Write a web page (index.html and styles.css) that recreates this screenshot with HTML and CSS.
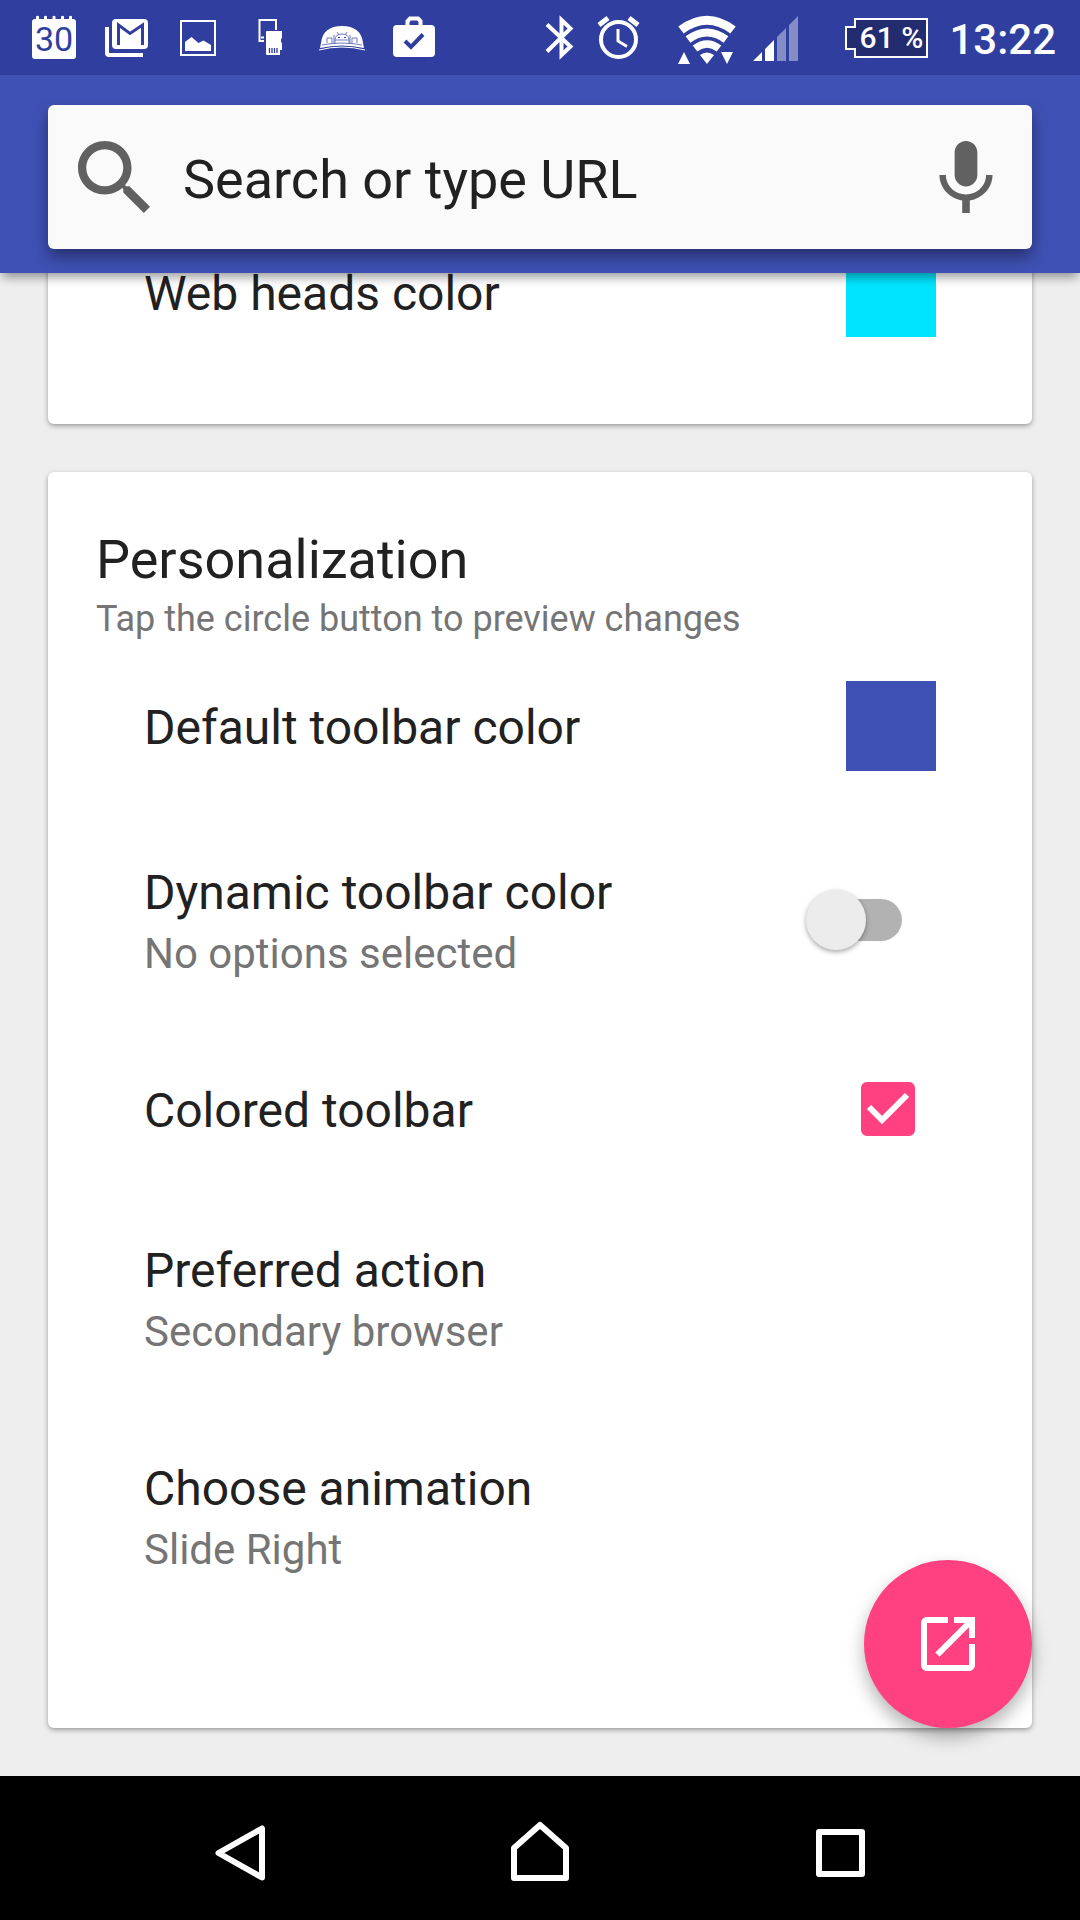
FILE: index.html
```html
<!DOCTYPE html>
<html lang="en">
<head>
    <meta charset="UTF-8">
    <meta name="viewport" content="width=device-width, initial-scale=1">
    <title>Settings</title>
    <link rel="stylesheet" href="styles.css">
</head>
<body>
    <header class="status-bar">
        <!-- notifications -->
        <svg class="notification" viewBox="0 0 72 75">
            <path fill="#fff" d="M17 19h1v-2.500q1.500-1.500 3 0V19h5v-2.500q1.500-1.500 3 0V19h5.500v-2.500q1.500-1.500 3 0V19H43v-2.500q1.500-1.500 3 0V19h5v-2.500q1.500-1.500 3 0V19h1q3 0 3 3v34q0 3-3 3H17q-3 0-3-3V22q0-3 3-3z"/>
            <text class="calendar-day" x="36" y="51">30</text>
        </svg>
        <svg class="notification" viewBox="0 0 72 75">
            <path fill="#fff" d="M15 27h4v26h34v4H19q-4 0-4-4z"/>
            <rect x="22" y="19" width="36" height="30" rx="4" fill="#fff"/>
            <path fill="none" stroke="#303f9f" stroke-width="3" d="M28.500 45V25L40 33.500 52.500 25v20"/>
        </svg>
        <svg class="notification" viewBox="0 0 72 75">
            <rect x="19" y="21" width="34" height="34" fill="none" stroke="#fff" stroke-width="2"/>
            <path fill="#fff" d="M23 51v-9l6.500-5 7 6 5-2.500L49 45v6z"/>
        </svg>
        <svg class="notification" viewBox="4 0 72 75">
            <path fill="none" stroke="#fff" stroke-width="2" d="M46 30V20H29.500v21H34M31 37.500h3"/>
            <path fill="#fff" d="M37 31h15v7l-1 1v3l1 1v7h-2v5H37q-1 0-1-1V32q0-1 1-1z"/>
            <path stroke="#303f9f" stroke-width="1.300" d="M39.500 48v5M42 48v5M44.500 48v5M47 48v5"/>
        </svg>
        <svg class="notification" viewBox="0 0 72 75">
            <path fill="#fff" d="M15 43q2-17 21-17t21 17l1 5q-22-5-44 0z"/>
            <path fill="none" stroke="#fff" stroke-width="1" d="M13 50q23-6 46 0"/>
            <path fill="none" stroke="#6f7abf" stroke-width="1" d="M16 45q20-4 40 0M29 44v-4q0-6 7-6t7 6v4M31 32l2 3M41 32l-2 3M29 40h14M21 43v-5h5v5M46 43v-5h5v5M28 35v8M44 35v8"/>
            <path fill="#303f9f" d="M32 37h2v1h-2zM38 37h2v1h-2z"/>
        </svg>
        <svg class="notification" viewBox="0 0 72 75">
            <rect x="15" y="25" width="42" height="32" rx="4" fill="#fff"/>
            <path fill="none" stroke="#fff" stroke-width="4" d="M29.500 26v-5l2.500-2.500h8l2.500 2.500v5"/>
            <path fill="none" stroke="#303f9f" stroke-width="4" d="M27 41l6 6 12-12.500"/>
        </svg>

        <!-- system icons -->
        <svg class="bluetooth" viewBox="0 0 60 75">
            <path fill="none" stroke="#fff" stroke-width="4" d="M17 24.500l23.500 22L31.500 55V20l9 8.500L17 51.500"/>
        </svg>
        <svg class="alarm" viewBox="0 0 60 75">
            <g fill="none" stroke="#fff">
                <circle cx="28.500" cy="39.500" r="17.500" stroke-width="4"/>
                <path stroke-width="3" d="M28 29v12l9 5.500"/>
                <path stroke-width="5" d="M9 25l9-7M39 18l9 7"/>
            </g>
        </svg>
        <svg class="wifi" viewBox="0 0 60 75">
            <g fill="none" stroke="#fff">
                <path stroke-width="9" d="M4 30Q30 10.500 56 30"/>
                <path stroke-width="8" d="M11 39.500Q30 25.500 49 39.500"/>
                <path stroke-width="7.500" d="M18 48.500Q30 39.500 42 48.500"/>
            </g>
            <path fill="#fff" d="M23 55q7-5 14 0l-7 9zM1 64l6-12 6 12zM44 52h12l-6 12z"/>
        </svg>
        <svg class="signal" viewBox="0 0 48 75">
            <path fill="#fff" d="M1 61l9-9v9zM13 61V49l9-9v21z"/>
            <path fill="#858dc6" d="M25 61V37l9-9v33zM37 61V25l9-9v45z"/>
        </svg>
        <div class="battery"><span class="battery-level">61 %</span></div>
        <time class="clock">13:22</time>
    </header>

    <div class="toolbar">
        <form class="search" role="search">
            <svg class="search-icon" viewBox="3 3 17.490 17.490">
                <path d="M15.500 14h-.79l-.28-.27C15.410 12.590 16 11.110 16 9.500 16 5.910 13.090 3 9.500 3S3 5.910 3 9.500 5.910 16 9.500 16c1.610 0 3.090-.59 4.230-1.570l.27.28v.79l5 4.990L20.490 19l-4.990-5zm-6 0C7.010 14 5 11.990 5 9.500S7.010 5 9.500 5 14 7.010 14 9.500 11.990 14 9.500 14z"/>
            </svg>
            <input type="text" class="search-input" placeholder="Search or type URL" aria-label="Search or type URL">
            <button type="button" class="voice" aria-label="Voice search">
                <svg class="mic-icon" viewBox="5 2 14 19">
                    <path d="M12 14c1.660 0 3-1.340 3-3V5c0-1.660-1.340-3-3-3S9 3.340 9 5v6c0 1.660 1.340 3 3 3zm5.300-3c0 3-2.540 5.100-5.300 5.100S6.700 14 6.700 11H5c0 3.410 2.720 6.230 6 6.720V21h2v-3.280c3.280-.48 6-3.300 6-6.720h-1.700z"/>
                </svg>
            </button>
        </form>
    </div>

    <main class="content">
        <section class="card">
            <div class="row row-color">
                <label class="row-text" for="web-heads-color"><span class="row-title">Web heads color</span></label>
                <button type="button" class="swatch swatch-cyan" id="web-heads-color"></button>
            </div>
        </section>

        <section class="card card-personalization">
            <h2 class="card-title">Personalization</h2>
            <p class="card-subtitle">Tap the circle button to preview changes</p>

            <div class="row row-color">
                <label class="row-text" for="toolbar-color"><span class="row-title">Default toolbar color</span></label>
                <button type="button" class="swatch swatch-indigo" id="toolbar-color"></button>
            </div>
            <div class="row">
                <label class="row-text" for="dynamic-toolbar">
                    <span class="row-title">Dynamic toolbar color</span>
                    <span class="row-summary">No options selected</span>
                </label>
                <input type="checkbox" role="switch" class="switch" id="dynamic-toolbar">
            </div>
            <div class="row">
                <label class="row-text" for="colored-toolbar"><span class="row-title">Colored toolbar</span></label>
                <span class="checkbox">
                    <input type="checkbox" class="checkbox-input" id="colored-toolbar" checked>
                    <svg class="checkbox-mark" viewBox="0 0 54 54">
                        <path d="M8 25l13 13 25-25"/>
                    </svg>
                </span>
            </div>
            <button type="button" class="row">
                <span class="row-text">
                    <span class="row-title">Preferred action</span>
                    <span class="row-summary">Secondary browser</span>
                </span>
            </button>
            <button type="button" class="row">
                <span class="row-text">
                    <span class="row-title">Choose animation</span>
                    <span class="row-summary">Slide Right</span>
                </span>
            </button>
        </section>

        <button type="button" class="fab" aria-label="Preview">
            <svg class="fab-icon" viewBox="0 0 24 24">
                <path d="M19 19H5V5h7V3H5c-1.110 0-2 .9-2 2v14c0 1.100.89 2 2 2h14c1.100 0 2-.9 2-2v-7h-2v7zM14 3v2h3.590l-9.830 9.830 1.410 1.410L19 6.410V10h2V3h-7z"/>
            </svg>
        </button>
    </main>

    <nav class="nav-bar">
        <button type="button" class="nav-button" aria-label="Back">
            <svg class="nav-icon" viewBox="0 0 72 72"><path d="M14.500 41L58 16.500v49z"/></svg>
        </button>
        <button type="button" class="nav-button" aria-label="Home">
            <svg class="nav-icon" viewBox="0 0 72 72"><path d="M10 66V36l26-23 26 23v30z"/></svg>
        </button>
        <button type="button" class="nav-button" aria-label="Recent apps">
            <svg class="nav-icon" viewBox="0 0 72 72"><path d="M15 20h43v42H15z"/></svg>
        </button>
    </nav>
</body>
</html>
```

FILE: styles.css
```css
* {
    box-sizing: border-box;
}

body {
    margin: 0;
    height: 100vh;
    display: flex;
    flex-direction: column;
    background-color: #eee;
    color: #212121;
    font-family: Roboto, "Noto Sans", sans-serif;
    overflow: hidden;
}

button {
    padding: 0;
    border: none;
    background: none;
    font: inherit;
    color: inherit;
    text-align: left;
}

svg {
    display: block;
    flex: none;
}

/* Status bar */

.status-bar {
    display: flex;
    align-items: center;
    flex: none;
    height: 75px;
    padding: 0 24px 0 18px;
    background-color: #303f9f;
    color: #fff;
}

.notification {
    width: 72px;
    height: 75px;
}

.calendar-day {
    font-size: 34px;
    font-weight: 400;
    text-anchor: middle;
    fill: #303f9f;
}

.bluetooth,
.alarm,
.wifi {
    width: 60px;
    height: 75px;
}

.bluetooth {
    margin-left: auto;
}

.wifi {
    margin-left: 27px;
}

.signal {
    width: 48px;
    height: 75px;
    margin-left: 15px;
}

.battery {
    display: flex;
    align-items: center;
    margin-left: 45px;
}

.battery::before {
    content: "";
    width: 9px;
    height: 20px;
    margin-right: -2px;
    border: 2px solid #fff;
    border-right: none;
    background-color: #232c6f;
    z-index: 1;
}

.battery-level {
    width: 74px;
    height: 40px;
    border: 2px solid #fff;
    background-color: #232c6f;
    font-size: 30px;
    font-weight: 500;
    line-height: 36px;
    text-align: center;
}

.clock {
    margin-left: 21px;
    padding-top: 4px;
    font-size: 42px;
    font-weight: 500;
    line-height: 50px;
}

/* Toolbar */

.toolbar {
    flex: none;
    padding: 30px 48px 24px;
    background-color: #3f51b5;
    box-shadow: 0 6px 10px -2px rgba(0, 0, 0, 0.4);
    z-index: 1;
}

.search {
    display: flex;
    align-items: center;
    gap: 33px;
    height: 144px;
    padding: 0 39px 0 30px;
    border-radius: 6px;
    background-color: #fafafa;
    box-shadow: 0 8px 16px rgba(0, 0, 0, 0.4);
}

.search-icon {
    width: 72px;
    height: 72px;
    fill: #616161;
}

.search-input {
    flex: 1;
    min-width: 0;
    height: 100%;
    padding: 4px 0 0;
    border: none;
    outline: none;
    background: none;
    font-family: inherit;
    font-size: 54px;
    color: #212121;
}

.search-input::placeholder {
    color: #212121;
    opacity: 1;
}

.mic-icon {
    width: 54px;
    height: 72px;
    fill: #616161;
}

/* Cards, scrolled to the end of the list */

.content {
    position: relative;
    display: flex;
    flex-direction: column;
    justify-content: flex-end;
    flex: 1;
    gap: 48px;
    min-height: 0;
    padding: 0 48px 48px;
}

.card {
    flex: none;
    padding: 0 96px 47px;
    border-radius: 6px;
    background-color: #fff;
    box-shadow: 0 2px 5px rgba(0, 0, 0, 0.35);
}

.card-personalization {
    padding-top: 50px;
    padding-bottom: 103px;
}

.card-title {
    margin: 0 -48px;
    font-size: 54px;
    font-weight: 400;
    line-height: 76px;
}

.card-subtitle {
    margin: 0 -48px;
    font-size: 36px;
    line-height: 43px;
    color: #757575;
}

.row {
    display: flex;
    align-items: center;
    width: 100%;
}

.row-color {
    height: 170px;
}

.row-text {
    flex: 1;
    padding: 50px 0 46px;
}

.row-title {
    display: block;
    font-size: 48px;
    line-height: 64px;
}

.row-summary {
    display: block;
    font-size: 42px;
    line-height: 58px;
    color: #757575;
}

.swatch {
    width: 90px;
    height: 90px;
}

.swatch-cyan {
    background-color: #00e5ff;
}

.swatch-indigo {
    background-color: #3f51b5;
}

.switch {
    appearance: none;
    position: relative;
    width: 96px;
    height: 60px;
    margin: 0 34px 0 0;
}

.switch::before {
    content: "";
    position: absolute;
    inset: 9px 0 9px 8px;
    border-radius: 21px;
    background-color: #b2b2b2;
}

.switch::after {
    content: "";
    position: absolute;
    left: 0;
    width: 60px;
    height: 60px;
    border-radius: 50%;
    background-color: #ececec;
    box-shadow: 0 2px 5px rgba(0, 0, 0, 0.35);
}

.switch:checked::after {
    left: auto;
    right: 0;
}

.checkbox {
    display: grid;
    margin-right: 21px;
}

.checkbox-input,
.checkbox-mark {
    grid-area: 1 / 1;
    width: 54px;
    height: 54px;
}

.checkbox-input {
    appearance: none;
    margin: 0;
    border: 6px solid #757575;
    border-radius: 6px;
}

.checkbox-input:checked {
    border-color: #ff4081;
    background-color: #ff4081;
}

.checkbox-mark {
    fill: none;
    stroke: #fff;
    stroke-width: 6;
    pointer-events: none;
}

/* Floating button */

.fab {
    position: absolute;
    right: 48px;
    bottom: 48px;
    display: flex;
    align-items: center;
    justify-content: center;
    width: 168px;
    height: 168px;
    border-radius: 50%;
    background-color: #ff4081;
    box-shadow: 0 9px 18px rgba(0, 0, 0, 0.3);
}

.fab-icon {
    width: 72px;
    height: 72px;
    fill: #fff;
}

/* Navigation bar */

.nav-bar {
    display: flex;
    flex: none;
    height: 144px;
    padding: 0 90px;
    background-color: #000;
    z-index: 1;
}

.nav-button {
    display: flex;
    align-items: center;
    justify-content: center;
    flex: 1;
}

.nav-icon {
    width: 72px;
    height: 72px;
    fill: none;
    stroke: #fff;
    stroke-width: 6;
    stroke-linejoin: round;
}
```
